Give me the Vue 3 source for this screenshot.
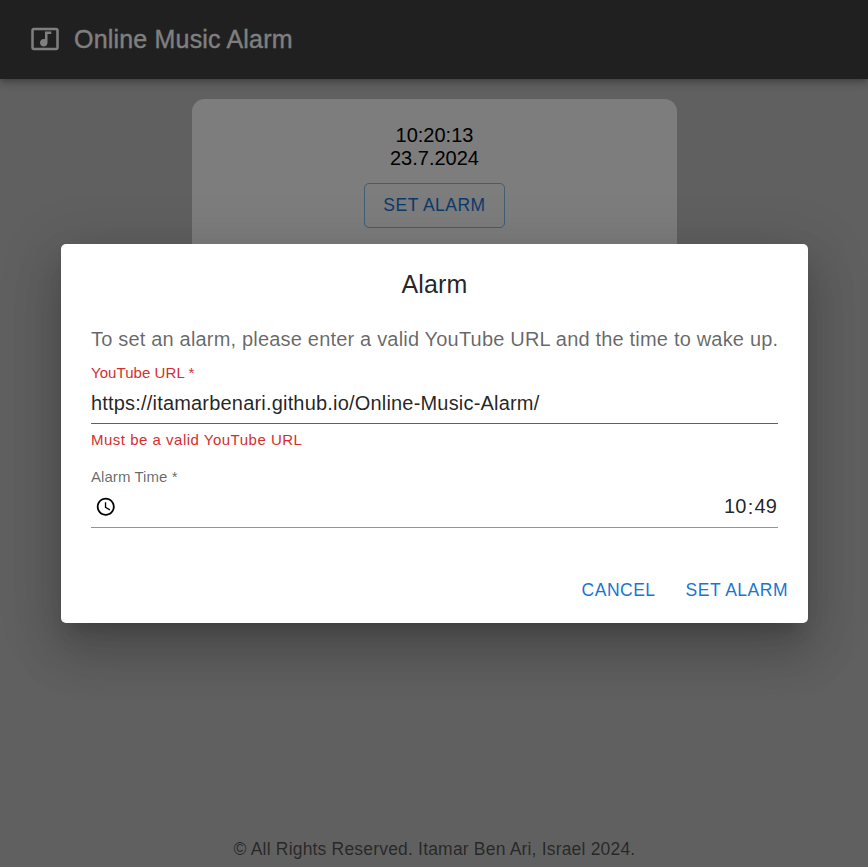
<script setup>
import { ref } from 'vue'

const time = ref('10:20:13')
const date = ref('23.7.2024')
const url = ref('https://itamarbenari.github.io/Online-Music-Alarm/')
const hours = ref('10')
const minutes = ref('49')
</script>

<template>
  <div class="page">
    <header class="app-bar">
      <svg class="logo" viewBox="0 0 24 24" aria-hidden="true">
        <path d="M21 3H3c-1.1 0-2 .9-2 2v14c0 1.1.9 2 2 2h18c1.1 0 2-.9 2-2V5c0-1.1-.9-2-2-2zm0 16H3V5h18v14zM8 15c0-1.66 1.34-3 3-3 .35 0 .69.07 1 .18V6h5v2h-3v7.03c-.02 1.64-1.35 2.97-3 2.97-1.66 0-3-1.34-3-3z" />
      </svg>
      <span class="brand">Online Music Alarm</span>
    </header>
    <main class="main">
      <section class="card">
        <div>{{ time }}</div>
        <div>{{ date }}</div>
        <button class="btn outlined">Set Alarm</button>
      </section>
    </main>
    <footer class="footer">© All Rights Reserved. Itamar Ben Ari, Israel 2024.</footer>

    <div class="backdrop">
      <div class="dialog" role="dialog">
        <h2 class="dialog-title">Alarm</h2>
        <div class="dialog-content">
          <p class="intro">To set an alarm, please enter a valid YouTube URL and the time to wake up.</p>
          <div class="field error">
            <label class="label">YouTube URL *</label>
            <div class="control">{{ url }}</div>
            <p class="helper">Must be a valid YouTube URL</p>
          </div>
          <div class="field">
            <label class="label">Alarm Time *</label>
            <div class="control time-control">
              <svg class="clock" viewBox="0 0 24 24" aria-hidden="true">
                <path d="M11.99 2C6.47 2 2 6.48 2 12s4.47 10 9.99 10C17.52 22 22 17.52 22 12S17.52 2 11.99 2zM12 20c-4.42 0-8-3.58-8-8s3.58-8 8-8 8 3.58 8 8-3.58 8-8 8zm.5-13H11v6l5.25 3.15.75-1.23-4.5-2.67z" />
              </svg>
              <span class="time-value"><span class="part">{{ hours }}</span><span class="colon">:</span><span class="part">{{ minutes }}</span></span>
            </div>
          </div>
        </div>
        <div class="actions">
          <button class="btn">Cancel</button>
          <button class="btn">Set Alarm</button>
        </div>
      </div>
    </div>
  </div>
</template>

<style>
body {
  margin: 0;
  overflow: hidden;
}
</style>

<style scoped>
.page {
  position: relative;
  display: flex;
  flex-direction: column;
  height: 100vh;
  background: #c0c0c0;
  font-family: Arial, "Liberation Sans", sans-serif;
  font-size: 20px;
  color: #000;
  overflow: hidden;
}
.app-bar {
  display: flex;
  align-items: center;
  flex: none;
  box-sizing: border-box;
  height: 79px;
  padding: 0 30px 1px;
  background: #414141;
  color: #fff;
  box-shadow: 0 2.5px 5px -1.25px rgba(0, 0, 0, 0.2), 0 5px 6.25px rgba(0, 0, 0, 0.14), 0 1.25px 12.5px rgba(0, 0, 0, 0.12);
}
.logo {
  width: 30px;
  height: 30px;
  margin-right: 14px;
  fill: currentColor;
}
.brand {
  font-size: 25px;
  line-height: 40px;
  letter-spacing: 0.0075em;
  -webkit-text-stroke: 0.3px currentColor;
}
.main {
  flex: 1;
  display: flex;
  justify-content: center;
  align-items: flex-start;
  padding-top: 20px;
}
.card {
  box-sizing: border-box;
  width: 485px;
  height: 400px;
  margin-left: 1px;
  padding-top: 25px;
  border-radius: 12.5px;
  background: #fafafa;
  text-align: center;
  line-height: 23px;
}
.btn {
  font-family: inherit;
  font-size: 17.5px;
  line-height: 1.75;
  letter-spacing: 0.02857em;
  text-transform: uppercase;
  color: #1976d2;
  background: transparent;
  border: 0;
  border-radius: 5px;
  padding: 7.5px 10px;
}
.btn.outlined {
  border: 1px solid rgba(25, 118, 210, 0.5);
  padding: 6.25px 18.75px;
  margin-top: 12.5px;
}
.footer {
  flex: none;
  height: 30px;
  padding-left: 1px;
  line-height: 25px;
  font-size: 17.5px;
  letter-spacing: 0.01071em;
  text-align: center;
  color: rgba(0, 0, 0, 0.6);
}
.backdrop {
  position: absolute;
  inset: 0;
  display: flex;
  align-items: center;
  justify-content: center;
  background: rgba(0, 0, 0, 0.5);
}
.dialog {
  box-sizing: border-box;
  width: 747px;
  margin-left: 1px;
  border-radius: 5px;
  background: #fff;
  color: rgba(0, 0, 0, 0.87);
  box-shadow: 0 13.75px 18.75px -8.75px rgba(0, 0, 0, 0.2), 0 30px 47.5px 3.75px rgba(0, 0, 0, 0.14), 0 11.25px 57.5px 10px rgba(0, 0, 0, 0.12);
}
.dialog-title {
  margin: 0;
  padding: 20px 30px;
  font-size: 25px;
  font-weight: 400;
  line-height: 40px;
  letter-spacing: 0.0075em;
  text-align: center;
}
.dialog-content {
  padding: 0 30px 25px;
}
.intro {
  margin: 0;
  line-height: 30px;
  letter-spacing: 0.00938em;
  color: rgba(0, 0, 0, 0.6);
  white-space: nowrap;
}
.field {
  padding: 10px 0 5px;
}
.label {
  display: block;
  height: 20px;
  line-height: 17px;
  font-size: 15px;
  letter-spacing: 0.004em;
  color: rgba(0, 0, 0, 0.6);
}
.control {
  box-sizing: border-box;
  height: 40px;
  padding: 5px 0 6px;
  line-height: 28px;
  letter-spacing: 0.00938em;
  border-bottom: 1px solid rgba(0, 0, 0, 0.42);
}
.error .label,
.error .helper {
  color: #d32f2f;
}
.error .control {
  border-bottom-color: #d32f2f;
}
.helper {
  margin: 3.75px 0 0;
  font-size: 15px;
  line-height: 1.66;
  letter-spacing: 0.03333em;
}
.time-control {
  display: flex;
  align-items: center;
  justify-content: space-between;
}
.clock {
  width: 21.5px;
  height: 21.5px;
  margin: 0 0 0.5px 3.5px;
  fill: #000;
}
.time-value {
  display: flex;
  line-height: 28px;
}
.part {
  padding: 0 1px;
}
.colon {
  padding-top: 1px;
}
.actions {
  display: flex;
  justify-content: flex-end;
  gap: 10px;
  padding: 10px;
}
</style>
